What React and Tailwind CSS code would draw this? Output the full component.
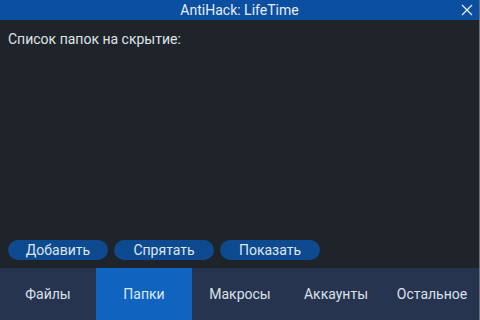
const tabs = ["Файлы", "Папки", "Макросы", "Аккаунты", "Остальное"];

const App = () => {
  return (
    <div
      className="w-[480px] h-[320px] flex flex-col bg-[#1f232a] border-r border-[#6a717c] overflow-hidden"
      style={{ fontFamily: "Roboto, 'Liberation Sans', sans-serif" }}
    >
      {/* Title bar */}
      <div className="relative h-[20px] shrink-0 bg-[#0b4fa0] flex items-center justify-center">
        <span className="text-[14px] text-[#e6edf7] leading-none">AntiHack: LifeTime</span>
        <svg
          className="absolute right-[6px] top-[4px]"
          width="12"
          height="12"
          viewBox="0 0 12 12"
          fill="none"
          stroke="#e6edf7"
          strokeWidth="1.3"
        >
          <path d="M1 1L11 11M11 1L1 11" />
        </svg>
      </div>

      {/* Content */}
      <div className="flex-1 flex flex-col px-[8px] pt-[11px] pb-[8px]">
        <div className="text-[14px] text-[#dfe3e8] leading-[16px]">Список папок на скрытие:</div>
        <div className="flex-1" />
        <div className="flex gap-[6px]">
          <button className="w-[100px] h-[20px] rounded-full bg-[#0d4a8f] text-[14px] text-[#dfe6f0] leading-none">
            Добавить
          </button>
          <button className="w-[100px] h-[20px] rounded-full bg-[#0d4a8f] text-[14px] text-[#dfe6f0] leading-none">
            Спрятать
          </button>
          <button className="w-[100px] h-[20px] rounded-full bg-[#0d4a8f] text-[14px] text-[#dfe6f0] leading-none">
            Показать
          </button>
        </div>
      </div>

      {/* Bottom tabs */}
      <div className="h-[52px] shrink-0 flex bg-[#26344f]">
        {tabs.map((t, i) => (
          <div
            key={t}
            className={
              i === 1
                ? "w-[96px] shrink-0 flex items-center justify-center bg-[#1064c0] text-[14px] text-[#dce7f5]"
                : "w-[96px] shrink-0 flex items-center justify-center text-[14px] text-[#dce1ea]"
            }
          >
            {t}
          </div>
        ))}
      </div>
    </div>
  );
};

export default App;
